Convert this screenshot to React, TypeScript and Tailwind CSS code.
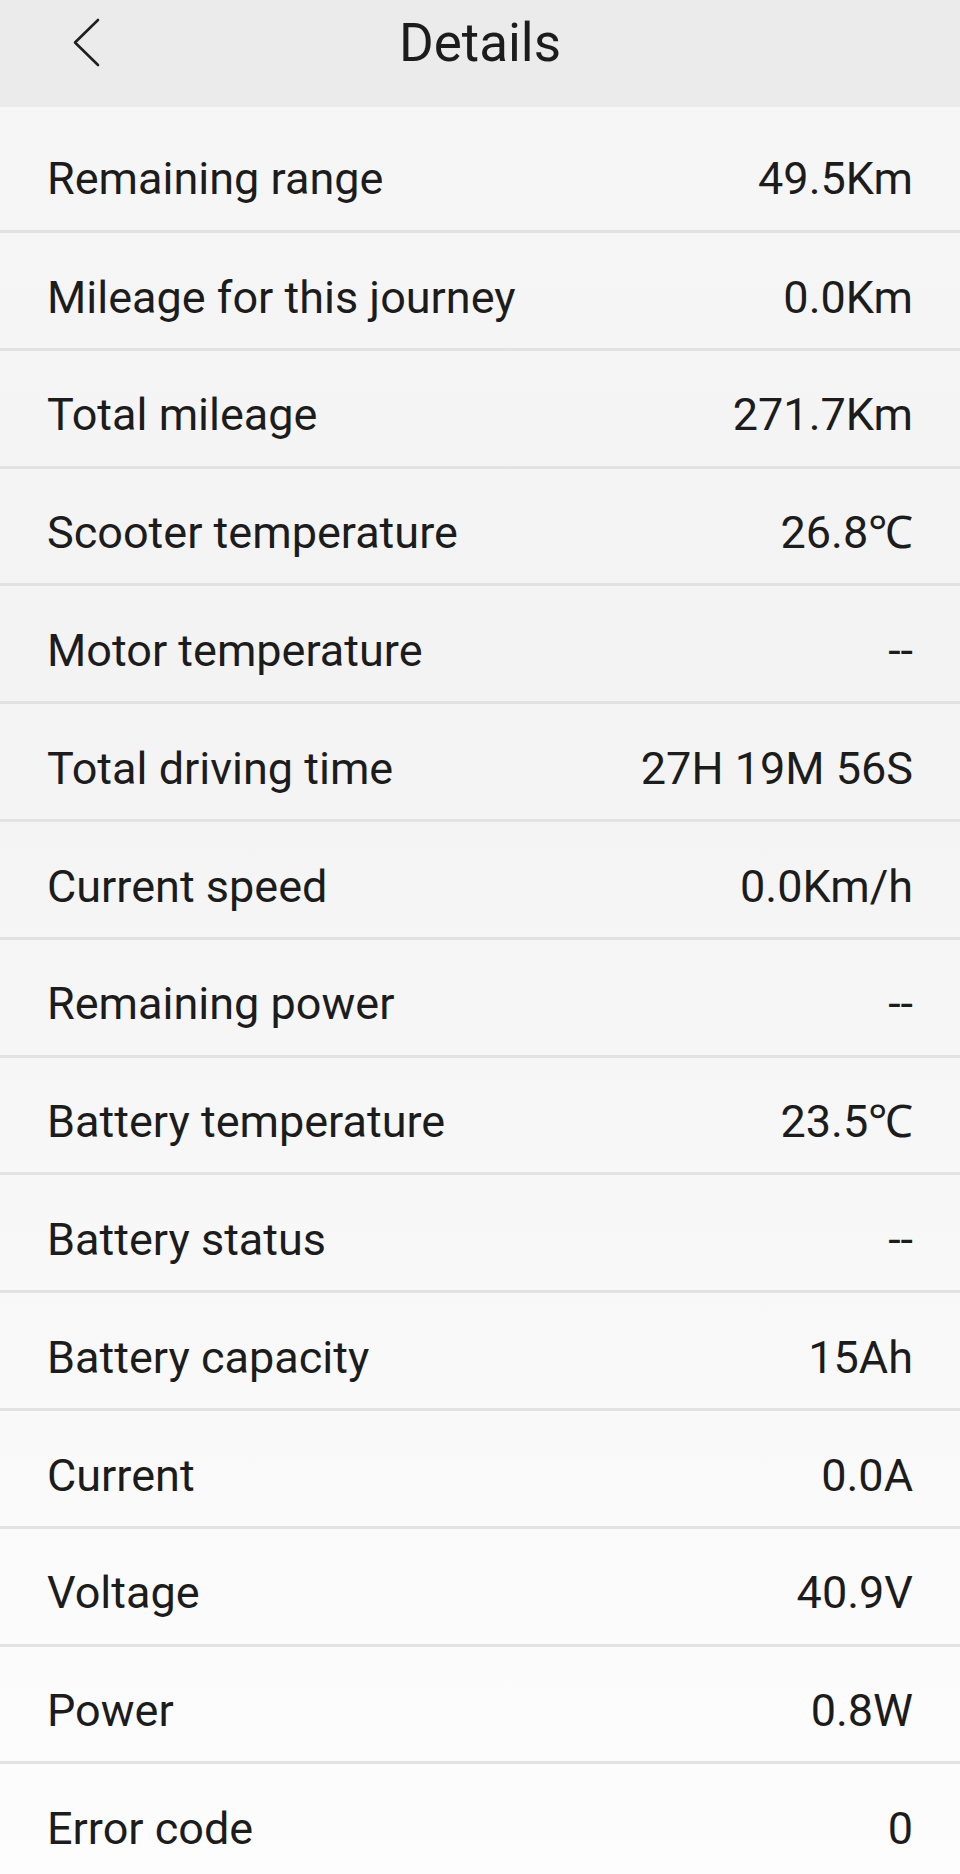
import React from "react";

const rows: [string, string][] = [
  ["Remaining range", "49.5Km"],
  ["Mileage for this journey", "0.0Km"],
  ["Total mileage", "271.7Km"],
  ["Scooter temperature", "26.8℃"],
  ["Motor temperature", "--"],
  ["Total driving time", "27H 19M 56S"],
  ["Current speed", "0.0Km/h"],
  ["Remaining power", "--"],
  ["Battery temperature", "23.5℃"],
  ["Battery status", "--"],
  ["Battery capacity", "15Ah"],
  ["Current", "0.0A"],
  ["Voltage", "40.9V"],
  ["Power", "0.8W"],
  ["Error code", "0"],
];

export default function App() {
  return (
    <div className="w-[960px] h-[1874px] overflow-hidden font-['Roboto','Noto_Sans',sans-serif] text-[#1c1c1c] bg-linear-to-b from-[#f7f7f7] via-[#f3f3f3] via-35% to-[#fdfdfd]">
      <header className="h-[107px] bg-[#ebebeb]">
        <div className="h-[86px] grid grid-cols-[1fr_auto_1fr] items-center">
          <div className="pl-[73px] flex items-center">
            <svg width="28" height="50" viewBox="0 0 28 50" fill="none">
              <polyline
                points="25,2 2,24.5 25,47"
                stroke="#1f1f1f"
                strokeWidth="2.6"
                strokeLinecap="round"
                strokeLinejoin="round"
              />
            </svg>
          </div>
          <h1 className="text-[53px] leading-none font-normal tracking-[0px]">Details</h1>
          <div />
        </div>
      </header>
      <div className="flex flex-col">
        {rows.map(([label, value], i) => (
          <div key={label} className="flex flex-col">
            <div
              className={
                i === 0
                  ? "h-[123px] pt-[20px] px-[47px] flex items-center justify-between text-[45px]"
                  : "h-[114.8px] pt-[14px] px-[47px] flex items-center justify-between text-[45px]"
              }
            >
              <span>{label}</span>
              <span>{value}</span>
            </div>
            <div className="h-[3px] bg-[#e2e2e2]" />
          </div>
        ))}
      </div>
    </div>
  );
}
